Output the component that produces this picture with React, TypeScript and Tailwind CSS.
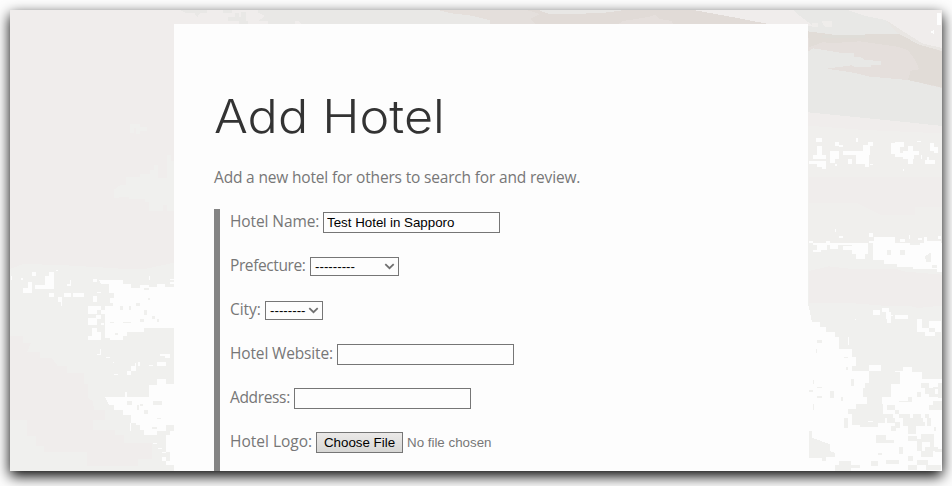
import React from "react";

type Blocks = [number, number, number, number][];

// Blocks are [x, y, width, height] in thirds of a pixel.
const leftWhite: Blocks = [
  [32, 98, 4, 12], [62, 104, 6, 6], [96, 87, 12, 12], [148, 87, 13, 12], [134, 98, 27, 28], [105, 125, 56, 14], [168, 80, 6, 4],
  [83, 117, 13, 32], [69, 136, 27, 14], [147, 150, 14, 12], [174, 162, 12, 15], [182, 176, 4, 12], [192, 150, 21, 12], [219, 150, 33, 12],
  [210, 110, 3, 18], [201, 124, 12, 5], [279, 108, 12, 9], [290, 147, 13, 3], [279, 159, 12, 18],
  [264, 189, 27, 25], [264, 225, 27, 21], [291, 189, 12, 12], [303, 201, 12, 13], [288, 217, 15, 11], [276, 255, 15, 36], [264, 278, 30, 13], [291, 268, 12, 23], [303, 240, 8, 6],
  [301, 318, 3, 17], [291, 332, 12, 3], [317, 342, 13, 3], [339, 356, 3, 4], [342, 393, 12, 3], [381, 384, 12, 12], [393, 370, 15, 14], [405, 360, 3, 12], [414, 357, 6, 12],
  [447, 99, 3, 12], [510, 108, 12, 4], [510, 117, 12, 5], [447, 366, 12, 3], [471, 357, 27, 12], [480, 333, 30, 7], [495, 340, 14, 5],
  [390, 540, 3, 24], [459, 600, 12, 3], [474, 615, 12, 3], [486, 627, 12, 3], [485, 642, 13, 12], [375, 447, 6, 15],
  [330, 255, 51, 36], [316, 264, 14, 22],
];
const leftHoles: Blocks = [
  [360, 189, 9, 12], [330, 180, 10, 9], [387, 189, 7, 12], [408, 180, 13, 9], [432, 201, 9, 14], [471, 228, 6, 10], [420, 228, 12, 10], [369, 237, 24, 3],
  [345, 270, 9, 6], [369, 279, 12, 12], [330, 237, 12, 3], [444, 165, 6, 6], [393, 267, 12, 10], [456, 219, 9, 9], [432, 136, 16, 4],
  [381, 474, 15, 12], [411, 486, 6, 15], [432, 501, 12, 12], [459, 474, 27, 12], [420, 482, 9, 6], [471, 525, 12, 3], [456, 552, 14, 6],
];
const rightTopWhite: Blocks = [
  [470, 38, 14, 37], [452, 94, 10, 6], [459, 90, 3, 12], [108, 414, 18, 12], [165, 426, 12, 12], [177, 436, 12, 4],
  [111, 438, 15, 26], [99, 465, 38, 12], [87, 483, 50, 9], [111, 492, 27, 10], [126, 500, 11, 7], [150, 453, 27, 24], [150, 477, 14, 13], [165, 492, 5, 7],
  [228, 414, 6, 12], [264, 426, 15, 12], [249, 435, 21, 19], [189, 453, 80, 12], [204, 477, 12, 14], [228, 465, 40, 28], [255, 492, 12, 10], [270, 491, 9, 4],
  [333, 429, 26, 32], [345, 426, 27, 15], [345, 460, 24, 12], [369, 453, 48, 12], [384, 438, 15, 53], [369, 465, 34, 12], [369, 507, 3, 7],
  [411, 423, 12, 3], [450, 429, 12, 23], [450, 440, 24, 12], [462, 450, 12, 10], [441, 471, 6, 20], [435, 479, 30, 12], [422, 465, 4, 12],
  [165, 687, 3, 9], [177, 708, 12, 6], [267, 699, 12, 12], [281, 711, 64, 18], [267, 723, 60, 6], [360, 717, 15, 8], [386, 705, 4, 12], [414, 714, 12, 6], [432, 711, 9, 18], [441, 723, 43, 6], [474, 708, 10, 10], [87, 723, 12, 6], [138, 723, 12, 6],
];
const rightWhite: Blocks = [
  [99, 0, 165, 6], [111, 6, 30, 15], [99, 20, 25, 7], [150, 6, 24, 12], [189, 9, 38, 13], [216, 0, 48, 33], [228, 33, 27, 14],
  [280, 201, 19, 15], [306, 195, 21, 12], [318, 207, 15, 20], [320, 227, 13, 12], [345, 216, 39, 12], [333, 216, 6, 4],
  [411, 228, 14, 38], [411, 254, 36, 12], [435, 267, 30, 12], [447, 233, 37, 21], [465, 233, 19, 33], [224, 228, 4, 3],
  [204, 282, 3, 24], [192, 317, 24, 26], [204, 342, 24, 26],
];
const rightHoles: Blocks = [
  [87, 440, 12, 7], [111, 432, 16, 3], [111, 460, 15, 6], [99, 411, 3, 12], [150, 445, 12, 21], [99, 483, 4, 18], [183, 461, 6, 13],
  [108, 318, 3, 12], [111, 292, 15, 7], [198, 372, 6, 9], [267, 384, 78, 38], [255, 420, 78, 24], [249, 435, 84, 28], [261, 462, 45, 42], [228, 484, 80, 50], [216, 498, 48, 48],
  [204, 498, 24, 15], [192, 525, 12, 29], [213, 408, 9, 20], [240, 536, 54, 16], [294, 513, 45, 12], [279, 525, 36, 14], [321, 486, 24, 14], [321, 525, 24, 15], [345, 501, 12, 12],
  [356, 514, 34, 12], [369, 526, 60, 24], [384, 548, 24, 25], [345, 537, 14, 18], [399, 514, 24, 12], [408, 537, 27, 12], [333, 549, 16, 15], [357, 474, 27, 3], [345, 387, 15, 36], [384, 462, 12, 15], [411, 447, 12, 15],
  [424, 420, 24, 14], [435, 435, 30, 18], [447, 453, 38, 9], [459, 432, 26, 6], [474, 420, 11, 44], [459, 474, 26, 13], [447, 486, 38, 15], [435, 513, 12, 12], [442, 526, 10, 24],
  [288, 576, 30, 24], [318, 590, 24, 9], [384, 579, 27, 16], [423, 574, 38, 24], [411, 588, 14, 36], [435, 612, 40, 12], [423, 624, 35, 17], [449, 594, 12, 20], [384, 639, 15, 16], [357, 613, 12, 21],
  [294, 630, 12, 6], [273, 654, 21, 14], [318, 651, 40, 12], [177, 654, 36, 30], [165, 666, 48, 18], [213, 666, 27, 10], [384, 666, 28, 15], [410, 650, 34, 16], [438, 667, 46, 13], [465, 618, 20, 10], [462, 551, 6, 12],
];

function BlockSet({ items, fill }: { items: Blocks; fill: string }) {
  return (
    <>
      {items.map(([x, y, width, height], i) => (
        <rect key={i} x={x} y={y} width={width} height={height} fill={fill} />
      ))}
    </>
  );
}

function Backdrop() {
  return (
    <svg className="absolute inset-0 h-full w-full" viewBox="10 10 932 461" preserveAspectRatio="none" shapeRendering="crispEdges" aria-hidden="true">
      <rect x="10" y="10" width="932" height="461" fill="#f0edec" />
      <g transform="translate(160 0) scale(.333333)">
        <path d="M295 30h700v42H425l-10-8h-10v8h-80v-9h-30l20-15-20-10z M62 30h78v8h-20l-8 14-8-12H78z M204 50h22V38h10v12h8V36h14v26h6v10h-26v-9h-34z M190 30h25v8h-25z" fill="#e9e8e6" />
        <path d="M832 30h163v32l-60-15-60-7z" fill="#e5dfdb" />
      </g>
      <g transform="translate(490 0) scale(.333333)">
        <path d="M0 30h610l100 18 125 24H0z" fill="#e1dbd7" />
        <path d="M0 30h110l40 12-30 15 15 15H0z" fill="#e4dfdc" />
        <path d="M145 30h260l-60 8-110 5-60-2z" fill="#e8e7e5" />
        <path d="M385 72l15-9 75-12 20-6 15 12 35 6 5 9z" fill="#e5dfdc" />
      </g>
      <g transform="translate(0 0) scale(.333333)">
        <path d="M342 594v-25l18-13h18v-26h42v-9h30v-12h12v-15h12v39h26v-69h12v18h10v150h-20v-18h-12v18h-43v-27h-12v-9h-48v-6z" fill="#f0f0ee" />
        <path d="M390 372h30v9h21v12h-21v8h-12v-16h-6v14h-12z" fill="#f0f0ee" />
      </g>
      <g transform="translate(0 243) scale(.333333)">
        <path d="M30 78l40-15 110 3 120 7 60 4h80l82-18v625H30z" fill="#f0f0ee" />
        <path d="M30 280h38v20h25l-12 28h40v18h36l15 22h28v22h51v32h12v42l15 10 5 27h33v30h-38v30h68v14h27v26h84v47h-42v20H262v-40H132v-18h-24v-32H81v-46H30z" fill="#f0edec" />
        <path d="M297 111h72v13h24v12h27v-9h28v6h22v-9h24v7h28v124H432v12H381v12H369v12H330V267H315V189h15V165h12V150h-15V124H303z M315 462h132V426h24V408h27v15h24v124H498v18H471v11H432v-15H420v-15H408V540H393V516H369V501H342V486H327z M522 564v102h-24v-12h12V627h-12V576h12V564z" fill="#fdfdfd" />
        <BlockSet items={leftWhite} fill="#fdfdfd" />
        <BlockSet items={leftHoles} fill="#f0f0ee" />
      </g>
      <g transform="translate(780 0) scale(.333333)">
        <path d="M40 30h446v390H84V78H100L60 48z" fill="#e8e8e6" />
        <path d="M95 68h18v14H95z M125 64h30v18h-20z" fill="#efedeb" />
        <path d="M84 94L486 150V264L384 240L270 230L215 217L140 206L215 196L225 202H272V195H304V183L255 180L240 170H222V160L180 158L100 145L84 155z" fill="#e5dfdc" />
        <path d="M84 94L160 104L360 103L410 130L486 154V262L384 240L392 212L418 208L405 180L384 150L350 140L240 124L150 130L130 126L88 142z" fill="#e1dcd7" />
        <path d="M126 106h128v9H126z" fill="#dfddd8" />
        <path d="M203 30h283v116l-59-16-64-40-46-30-60-12z" fill="#f0edec" />
        <path d="M317 60l46 30 64 40 59 14v9l-65-18-70-37z" fill="#e9e6e3" />
        <path d="M84 337l150 15 160 16 92 10v351H84z" fill="#f0efed" />
        <path d="M84 337l150 15 160 16 92 10v22l-232-10-170-13z M87 530h399v90h-82v25h-100l-70-35H87z" fill="#f0edec" />
        <BlockSet items={rightTopWhite} fill="#fdfdfd" />
      </g>
      <g transform="translate(780 243) scale(.333333)">
        <path d="M84 0h402v684H84z" fill="#f0f0ee" />
        <path d="M87 84l60-14 70 8h130l30 8 109 9v93l-72 7-30-7h-75l-100-8H87z" fill="#f0edec" />
        <path d="M280 0h206v88h-14V78h-72v-6h-48v-9h-40v-12h-32z M84 180l12 58h24v15h18v14h27v15h12v36h15v27h24v39h50v-18h38v18h66v-12h25v16h30v20h61v297H84z" fill="#fdfdfd" />
        <path d="M87 564h9v20l54 20v20l15 6v12h-27v12h-12v-10H87z" fill="#f0f0ee" />
        <BlockSet items={rightWhite} fill="#fdfdfd" />
        <BlockSet items={rightHoles} fill="#f0f0ee" />
        <path d="M321 20h12v16h-12z M360 20h15v16h-15z M435 40l18-12v28h-15z M456 66h16v8h-16z M390 0h30v6h-30z" fill="#f0f0ee" />
      </g>
    </svg>
  );
}

const inputClass = "h-[21px] w-[177px] border border-[#767676] bg-[#fdfdfd] px-[3px] font-['Liberation_Sans',Arial,sans-serif] text-[13.333px] leading-none text-black outline-none";

function Row({ label, labelClass, children }: { label: string; labelClass: string; children: React.ReactNode }) {
  return (
    <div className="flex h-[27px] items-center">
      <label className={`shrink-0 whitespace-nowrap pb-[2px] ${labelClass}`}>{label}</label>
      {children}
    </div>
  );
}

function Select({ text, className }: { text: string; className: string }) {
  return (
    <button type="button" className={`flex h-[19px] items-center justify-between border border-[#767676] bg-[#fdfdfd] pl-1 pr-[3px] font-['Liberation_Sans',Arial,sans-serif] text-[13.333px] leading-none text-black ${className}`}>
      <span>{text}</span>
      <svg className="h-[7px] w-[11px]" viewBox="0 0 11 7" fill="none" stroke="#707070" strokeWidth="1.8"><path d="M1.3 1.2 5.5 5.2 9.7 1.2" /></svg>
    </button>
  );
}

export default function App() {
  return (
    <div className="h-[486px] w-[952px] overflow-hidden bg-[#fdfdfd] p-[10px]">
      <div className="relative h-[461px] w-[932px] shadow-[0_5px_13px_#000]">
        <Backdrop />
        <main className="relative flex h-full overflow-hidden pl-[164px] pt-[14px]">
          <section className="w-[634px] bg-[#fdfdfd] px-10 pt-[61px] font-['Open_Sans','Noto_Sans',sans-serif] text-[15.5px] text-[#777]">
            <h1 className="h-[62px] origin-left scale-x-[1.093] whitespace-nowrap font-['Inter',sans-serif] text-[46px] font-light leading-[62px] text-[#333]">Add Hotel</h1>
            <p className="mt-[18px] h-6 whitespace-nowrap leading-6 tracking-[-0.175px]">Add a new hotel for others to search for and review.</p>
            <form className="mt-5 flex h-[280px] flex-col gap-[17px] border-l-6 border-[#848484] pl-[10px]">
              <Row label="Hotel Name:" labelClass="w-[93px] tracking-[-0.1px]"><input className={inputClass} defaultValue="Test Hotel in Sapporo" /></Row>
              <Row label="Prefecture:" labelClass="w-[80px] tracking-[-0.4px]"><Select text="---------" className="w-[89px]" /></Row>
              <Row label="City:" labelClass="w-[35px] tracking-[-0.05px]"><Select text="--------" className="w-[58px]" /></Row>
              <Row label="Hotel Website:" labelClass="w-[107px] tracking-[-0.15px]"><input className={inputClass} /></Row>
              <Row label="Address:" labelClass="w-[64px] tracking-[-0.35px]"><input className={inputClass} /></Row>
              <Row label="Hotel Logo:" labelClass="w-[86px] tracking-[0px]">
                <button type="button" className="h-[21px] w-[87px] whitespace-nowrap border border-[#767676] bg-linear-to-b from-[#ebe9e8] to-[#d7d7d5] font-['Liberation_Sans',Arial,sans-serif] text-[13.333px] leading-none text-black">Choose File</button>
                <span className="ml-1 font-['Liberation_Sans',Arial,sans-serif] text-[13.333px]">No file chosen</span>
              </Row>
            </form>
          </section>
        </main>
      </div>
    </div>
  );
}
